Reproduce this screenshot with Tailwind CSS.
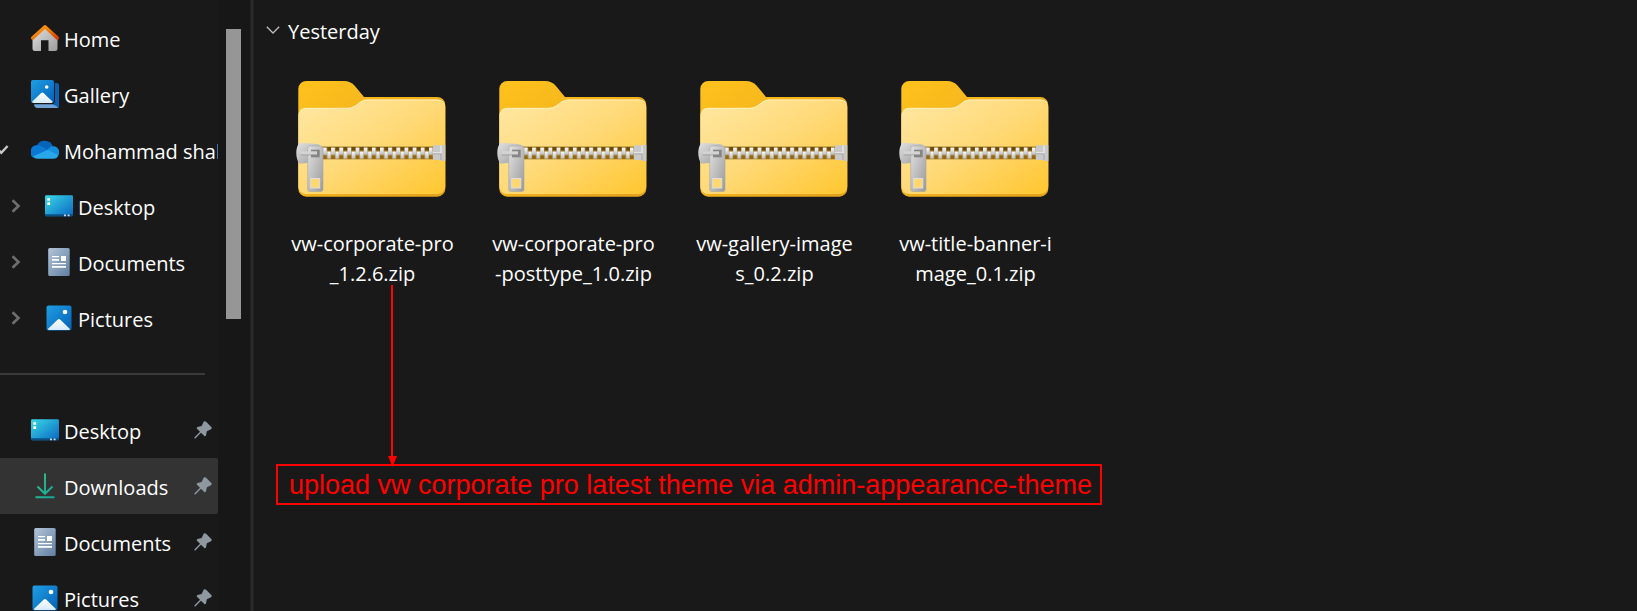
<!DOCTYPE html>
<html lang="en">
<head>
    <meta charset="UTF-8">
    <meta name="viewport" content="width=device-width, initial-scale=1.0">
    <title>Downloads</title>
    <script src="https://cdn.jsdelivr.net/npm/@tailwindcss/browser@4"></script>
</head>
<body class="bg-[#191919] text-white font-['Open_Sans','Noto_Sans',sans-serif] text-[20px] leading-[30px]">

    <!-- Shared icons -->
    <svg class="absolute w-0 h-0" aria-hidden="true">
        <defs>
            <linearGradient id="roof" x1="0" y1="0" x2="1" y2="1"><stop offset="0" stop-color="#f9a11b"/><stop offset=".5" stop-color="#f07c08"/><stop offset="1" stop-color="#d83b01"/></linearGradient>
            <linearGradient id="wall" x1="0" y1="0" x2="1" y2="1"><stop offset="0" stop-color="#e3e3e3"/><stop offset="1" stop-color="#9c9c9c"/></linearGradient>
            <linearGradient id="photo" x1="0" y1="0" x2="1" y2="1"><stop offset="0" stop-color="#1f9fe3"/><stop offset="1" stop-color="#0560b8"/></linearGradient>
            <linearGradient id="hill" x1="0" y1="0" x2="0" y2="1"><stop offset="0" stop-color="#ffffff"/><stop offset="1" stop-color="#d6eafb"/></linearGradient>
            <linearGradient id="screen" x1="0" y1="0" x2="1" y2="1"><stop offset="0" stop-color="#3ad9e6"/><stop offset="1" stop-color="#0a66c2"/></linearGradient>
            <linearGradient id="paper" x1="0" y1="0" x2="1" y2="1"><stop offset="0" stop-color="#b3c4d9"/><stop offset="1" stop-color="#617f9f"/></linearGradient>
            <linearGradient id="arrow" x1="0" y1="0" x2="1" y2="1"><stop offset="0" stop-color="#34c78a"/><stop offset="1" stop-color="#12a59a"/></linearGradient>
            <linearGradient id="folderBack" x1="0" y1="0" x2="1" y2="1"><stop offset="0" stop-color="#ffc21c"/><stop offset="1" stop-color="#e3a11e"/></linearGradient>
            <linearGradient id="folderFront" x1="0" y1="0" x2="1" y2="1"><stop offset="0" stop-color="#ffe8a4"/><stop offset=".5" stop-color="#ffd977"/><stop offset="1" stop-color="#ffc62e"/></linearGradient>
            <linearGradient id="metal" x1="0" y1="0" x2="1" y2="1"><stop offset="0" stop-color="#e2e2e2"/><stop offset="1" stop-color="#999999"/></linearGradient>
            <linearGradient id="tooth" x1="0" y1="0" x2="0" y2="1"><stop offset="0" stop-color="#ffffff"/><stop offset="1" stop-color="#b9b9b9"/></linearGradient>
            <pattern id="teeth" x="27" y="65.6" width="8.15" height="13" patternUnits="userSpaceOnUse">
                <rect width="8.15" height="13" fill="#94690f"/>
                <rect x="4" y="0" width="4.1" height="4" fill="#6f4c05"/>
                <rect x="0" y="1" width="3.8" height="7.400" fill="url(#tooth)"/>
                <rect x="4.1" y="4.8" width="3.8" height="7.600" fill="url(#tooth)"/>
            </pattern>
        </defs>

        <symbol id="i-home" viewBox="0 0 28 28">
            <path d="M1.500 12 14 2.500 26.500 12V24.500a2.500 2.500 0 0 1-2.500 2.500H17.500V16.300h-7.500V27H4A2.500 2.500 0 0 1 1.500 24.500Z" fill="url(#wall)"/>
            <path d="M1.700 14 14 2.800 26.300 14" fill="none" stroke="url(#roof)" stroke-width="3.400" stroke-linecap="round" stroke-linejoin="round"/>
        </symbol>
        <symbol id="i-gallery" viewBox="0 0 28 28">
            <path d="M24 3h1.500A2.500 2.500 0 0 1 28 5.500V25.500a2.500 2.500 0 0 1-2.500 2.500H24Z" fill="#0b62b5"/>
            <path d="M3.200 24.300H22.500L27.500 27.200Q26.700 28 25.500 28H6.500A3.300 3.300 0 0 1 3.200 24.300Z" fill="#6fa3d8"/>
            <path d="M22 24.300Q24 24 24 21L28 22V25.500Q28 26.500 27.300 27.200Z" fill="#0b62b5"/>
            <rect width="23" height="23" rx="2" fill="url(#photo)"/>
            <path d="M1 21.800 10 13.200a2 2 0 0 1 2.700 0L21.800 21.800Q21 23 20 23H3Q1.500 23 1 21.800Z" fill="url(#hill)"/>
            <circle cx="15.700" cy="7" r="1.800" fill="#fff"/>
        </symbol>
        <symbol id="i-cloud" viewBox="0 0 28 28">
            <path d="M5.500 10A9 9 0 0 1 22 10.500L17 16Z" fill="#0864b8"/>
            <path d="M5.500 9.300A7.500 7.500 0 0 1 11 10.500L18 14.500 12 19 2 21.500A6.800 6.800 0 0 1 5.500 9.300Z" fill="#0a78d4"/>
            <path d="M16.500 14Q18.500 10.500 22 10.300A6 6 0 0 1 27.300 19.500L20 18Z" fill="#168ee0"/>
            <path d="M1.800 20.500 16.700 13.800 27.300 19.200A5 5 0 0 1 22.500 22.800H6.500A6.500 6.500 0 0 1 1.800 20.500Z" fill="#28a8ea"/>
        </symbol>
        <symbol id="i-desktop" viewBox="0 0 28 28">
            <rect y="3.200" width="28" height="21" rx="1.300" fill="url(#screen)"/>
            <path d="M0 22.200h28v.8a1.300 1.300 0 0 1-1.300 1.300H1.300A1.300 1.300 0 0 1 0 23Z" fill="#0b4f86"/>
            <path d="M2.300 6.200h2.800v2.500H2.300zM2.300 10.200h2.800v2.700H2.300z" fill="#fff"/>
            <path d="M19 22.600h2v1.700h-2zM22.600 22.600h2v1.700h-2z" fill="#c6dcf0"/>
        </symbol>
        <symbol id="i-document" viewBox="0 0 28 28">
            <rect x="3.200" width="21.500" height="28" rx="1.600" fill="url(#paper)"/>
            <path d="M7 8h7v1.200H7zM7 11h7v1.700H7zM16 8h5v5h-5zM7 15h14v1.200H7zM7 18h14v1.700H7z" fill="#fff"/>
        </symbol>
        <symbol id="i-picture" viewBox="0 0 28 28">
            <rect x="1.500" y="1.500" width="25" height="25" rx="2" fill="url(#photo)"/>
            <path d="M2.600 25.300 12.500 15.700a2 2 0 0 1 2.900 0L25.200 25.300Q24.500 26 23.500 26H4.500Q3.300 26 2.600 25.300Z" fill="url(#hill)"/>
            <circle cx="20" cy="8" r="2.300" fill="#fff"/>
        </symbol>
        <symbol id="i-download" viewBox="0 0 28 28">
            <path d="M14 1.500V21.500M6.500 14.500 14 21.800 21.500 14.500M4.500 25.300H23.500" fill="none" stroke="url(#arrow)" stroke-width="1.900"/>
        </symbol>
        <symbol id="i-pin" viewBox="0 0 18 18">
            <path d="M9.800.6q1.200-.8 2.300.2L17.300 6q1 1.200-.3 2.200L12.900 10.300 12 14.300q-.5 1.500-1.700.6L7 11.800 1.300 17.600.4 17.300.3 16.500 6 10.800 3 7.800q-.8-1.300.5-1.800L7.600 5Z" fill="#8e989f"/>
        </symbol>
        <symbol id="i-expand" viewBox="0 0 10 14">
            <path d="M1.500 1.200 7.500 7 1.500 12.800" fill="none" stroke="#6e6e6e" stroke-width="2.600"/>
        </symbol>
        <symbol id="i-zip" viewBox="0 0 154 117">
            <path d="M2.300 8a8 8 0 0 1 8-8H48Q54.500 0 58.500 4.500L68 16H141.300a8 8 0 0 1 8 8V107.700a8 8 0 0 1-8 8H10.300a8 8 0 0 1-8-8Z" fill="url(#folderBack)"/>
            <path d="M2.300 34.500a7.500 7.500 0 0 1 7.500-7.500H52Q56 27 59.500 24.500L65 20.500Q67.500 18.700 70.500 18.700H142a7.300 7.300 0 0 1 7.300 7.300V105.500a7.500 7.500 0 0 1-7.500 7.500H9.800a7.500 7.500 0 0 1-7.500-7.500Z" fill="url(#folderFront)"/>
            <path d="M4.500 29.500Q7 27.300 10 27.300H52Q56 27.300 59.500 24.800L65 20.800Q67.500 19 70.500 19H142Q145.500 19 147.800 21.500" fill="none" stroke="#fff0bf" stroke-width="1"/>
            <rect x="25" y="65.600" width="112.500" height="12.700" fill="url(#teeth)"/>
            <path d="M137 64.300H145V64H149.300V80H145V79H137Z" fill="#c9c9c9"/>
            <path d="M137 71.800H145V64.500" fill="none" stroke="#ededed" stroke-width="1.200"/>
            <path d="M137 72.800H145V79" fill="none" stroke="#9f9f9f" stroke-width=".8"/>
            <path d="M3.500 61.700 21 63Q24 63.200 25.500 66V78Q24 80.600 21 81L3.500 82.700Q.3 79 .3 72T3.500 61.700Z" fill="url(#metal)"/>
            <path d="M13.700 65H25A2 2 0 0 1 27 67V108.500A2 2 0 0 1 25 110.500H13.700A2 2 0 0 1 11.700 108.500V67A2 2 0 0 1 13.700 65Z" fill="url(#metal)" stroke="#a6a6a6" stroke-width=".6"/>
            <rect x="15" y="68.700" width="8.700" height="7.600" fill="#858585"/>
            <rect x="4.700" y="70.300" width="16.300" height="3.400" fill="#d4d4d4"/>
            <path d="M4.700 73.900H21" stroke="#909090" stroke-width=".7"/>
            <rect x="14.700" y="97.500" width="9" height="9.500" fill="#ffd76e" stroke="#dedede" stroke-width="1"/>
        </symbol>
    </svg>

    <div class="flex h-screen overflow-hidden">

        <!-- Navigation pane -->
        <nav class="w-[218px] shrink-0 overflow-hidden pt-[10px]">
            <ul>
                <li>
                    <a href="#" class="flex h-14 items-center gap-[5px] pl-[31px]">
                        <svg class="size-7 shrink-0"><use href="#i-home"/></svg>
                        <span class="pt-[3px]">Home</span>
                    </a>
                </li>
                <li>
                    <a href="#" class="flex h-14 items-center gap-[5px] pl-[31px]">
                        <svg class="size-7 shrink-0"><use href="#i-gallery"/></svg>
                        <span class="pt-[3px]">Gallery</span>
                    </a>
                </li>
                <li class="relative">
                    <svg class="absolute left-0 top-[22px] h-[11px] w-[9px]" viewBox="0 0 9 11"><path d="M-5 2.500 1.300 8.800 7.600 2" fill="none" stroke="#c8c8c8" stroke-width="2.400"/></svg>
                    <a href="#" class="flex h-14 items-center gap-[5px] pl-[31px]">
                        <svg class="size-7 shrink-0"><use href="#i-cloud"/></svg>
                        <span class="whitespace-nowrap pt-[3px]">Mohammad shak</span>
                    </a>
                    <ul>
                        <li>
                            <a href="#" class="flex h-14 items-center pl-[11px]">
                                <svg class="h-[14px] w-[10px] shrink-0"><use href="#i-expand"/></svg>
                                <svg class="ml-6 mr-[5px] size-7 shrink-0"><use href="#i-desktop"/></svg>
                                <span class="pt-[3px]">Desktop</span>
                            </a>
                        </li>
                        <li>
                            <a href="#" class="flex h-14 items-center pl-[11px]">
                                <svg class="h-[14px] w-[10px] shrink-0"><use href="#i-expand"/></svg>
                                <svg class="ml-6 mr-[5px] size-7 shrink-0"><use href="#i-document"/></svg>
                                <span class="pt-[3px]">Documents</span>
                            </a>
                        </li>
                        <li>
                            <a href="#" class="flex h-14 items-center pl-[11px]">
                                <svg class="h-[14px] w-[10px] shrink-0"><use href="#i-expand"/></svg>
                                <svg class="ml-6 mr-[5px] size-7 shrink-0"><use href="#i-picture"/></svg>
                                <span class="pt-[3px]">Pictures</span>
                            </a>
                        </li>
                    </ul>
                </li>
            </ul>

            <hr class="my-[27px] mr-[13px] border-t-2 border-[#3a3a3a]">

            <!-- Pinned folders -->
            <ul>
                <li>
                    <a href="#" class="flex h-14 items-center gap-[5px] pl-[31px] pr-[6px]">
                        <svg class="size-7 shrink-0"><use href="#i-desktop"/></svg>
                        <span class="flex-1 pt-[3px]">Desktop</span>
                        <svg class="size-[18px] shrink-0"><use href="#i-pin"/></svg>
                    </a>
                </li>
                <li>
                    <a href="#" class="flex h-14 items-center gap-[5px] rounded-r-xs bg-[#333333] pl-[31px] pr-[6px]" aria-current="page">
                        <svg class="size-7 shrink-0"><use href="#i-download"/></svg>
                        <span class="flex-1 pt-[3px]">Downloads</span>
                        <svg class="size-[18px] shrink-0"><use href="#i-pin"/></svg>
                    </a>
                </li>
                <li>
                    <a href="#" class="flex h-14 items-center gap-[5px] pl-[31px] pr-[6px]">
                        <svg class="size-7 shrink-0"><use href="#i-document"/></svg>
                        <span class="flex-1 pt-[3px]">Documents</span>
                        <svg class="size-[18px] shrink-0"><use href="#i-pin"/></svg>
                    </a>
                </li>
                <li>
                    <a href="#" class="flex h-14 items-center gap-[5px] pl-[31px] pr-[6px]">
                        <svg class="size-7 shrink-0"><use href="#i-picture"/></svg>
                        <span class="flex-1 pt-[3px]">Pictures</span>
                        <svg class="size-[18px] shrink-0"><use href="#i-pin"/></svg>
                    </a>
                </li>
            </ul>
        </nav>

        <!-- Scrollbar -->
        <div class="w-8 shrink-0 bg-[#171717] pl-2 pt-[29px]">
            <div class="h-[290px] w-[15px] bg-[#969696]"></div>
        </div>
        <div class="w-1 shrink-0 border-x border-[#202020] bg-[#2b2b2b]"></div>

        <!-- Files -->
        <main class="relative min-w-0 flex-1 pt-[17px]">
            <button type="button" class="flex items-center gap-2 pl-3">
                <svg class="mb-1 h-2 w-[14px]" viewBox="0 0 14 8"><path d="M.8.8 7 7 13.200.8" fill="none" stroke="#bdbdbd" stroke-width="1.300"/></svg>
                <span>Yesterday</span>
            </button>

            <ul class="flex flex-wrap pl-[18px] pt-[34px] text-center">
                <li class="w-[201px]">
                    <a href="#" class="flex flex-col items-center gap-[31px]">
                        <svg class="h-[117px] w-[154px]"><use href="#i-zip"/></svg>
                        <span>vw-corporate-pro<br>_1.2.6.zip</span>
                    </a>
                </li>
                <li class="w-[201px]">
                    <a href="#" class="flex flex-col items-center gap-[31px]">
                        <svg class="h-[117px] w-[154px]"><use href="#i-zip"/></svg>
                        <span>vw-corporate-pro<br>-posttype_1.0.zip</span>
                    </a>
                </li>
                <li class="w-[201px]">
                    <a href="#" class="flex flex-col items-center gap-[31px]">
                        <svg class="h-[117px] w-[154px]"><use href="#i-zip"/></svg>
                        <span>vw-gallery-image<br>s_0.2.zip</span>
                    </a>
                </li>
                <li class="w-[201px]">
                    <a href="#" class="flex flex-col items-center gap-[31px]">
                        <svg class="h-[117px] w-[154px]"><use href="#i-zip"/></svg>
                        <span>vw-title-banner-i<br>mage_0.1.zip</span>
                    </a>
                </li>
            </ul>

            <!-- Callout drawn over the file list -->
            <p class="absolute left-[22px] top-[464px] whitespace-nowrap border-2 border-[#ff0000] pb-[2px] pl-[11px] pr-2 pt-1 font-['Liberation_Sans',Arial,sans-serif] text-[27px] leading-[31px] text-[#ff0000]">upload vw corporate pro latest theme via admin-appearance-theme</p>
            <svg class="absolute left-[134px] top-[285px] h-[182px] w-[9px]" viewBox="0 0 9 182" fill="#ff0000"><path d="M3 0H5V172H3ZM0 171H9L4.500 182Z"/></svg>
        </main>
    </div>
</body>
</html>
